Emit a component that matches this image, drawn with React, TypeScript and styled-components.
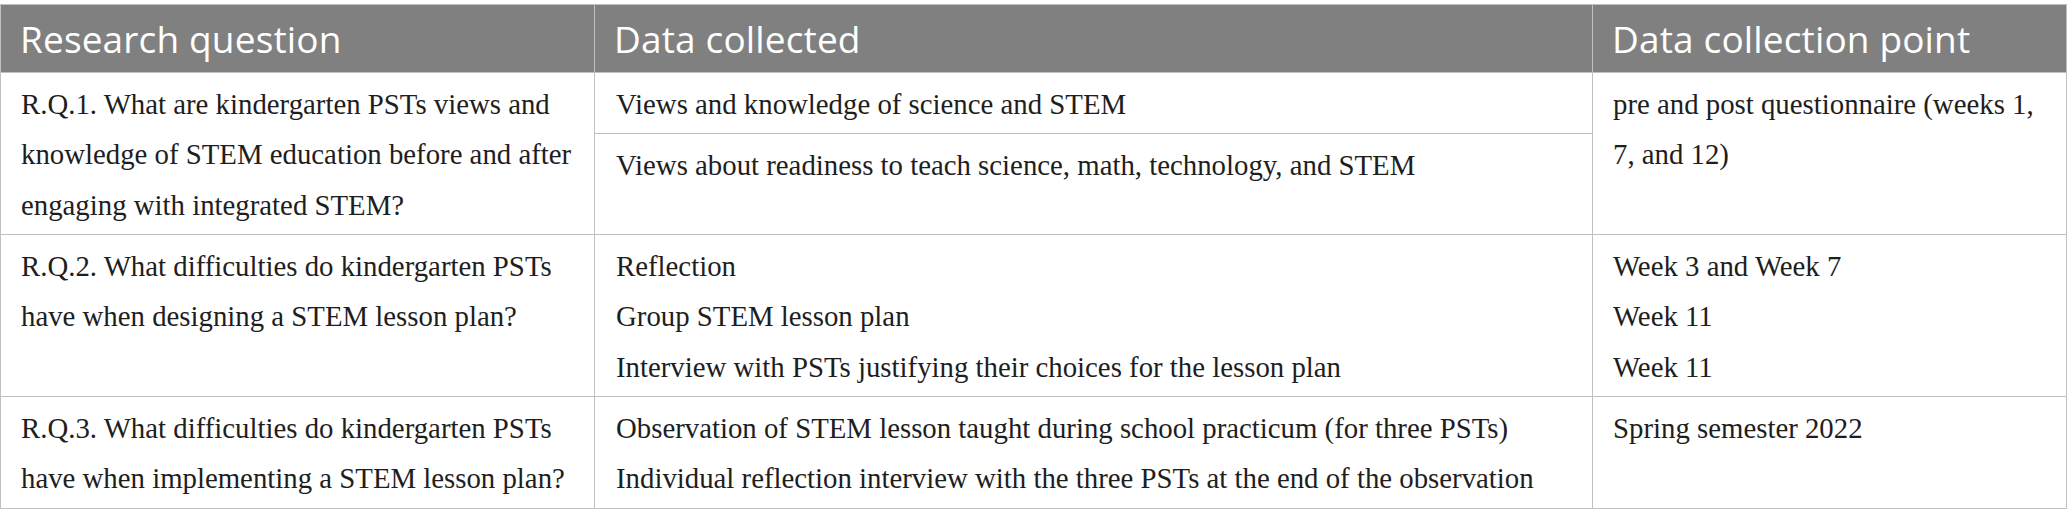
import React from "react";
import styled, { createGlobalStyle } from "styled-components";

const GlobalStyle = createGlobalStyle`
  html, body {
    margin: 0;
    padding: 0;
    background: #ffffff;
  }
`;

const BORDER = "#c0c0c0";

const Page = styled.div`
  padding-top: 4px;
`;

const Table = styled.div`
  display: grid;
  grid-template-columns: 594px 998px 474px;
  width: max-content;
  border-left: 1px solid ${BORDER};
  border-top: 1px solid ${BORDER};
`;

const HeadCell = styled.div`
  background: #808080;
  color: #ffffff;
  font-family: "Open Sans", "Liberation Sans", sans-serif;
  font-size: 37px;
  letter-spacing: 0.15px;
  line-height: 67px;
  padding: 0 19px;
  border-right: 1px solid ${BORDER};
  border-bottom: 1px solid ${BORDER};
  white-space: nowrap;
`;

const Cell = styled.div<{ $pad?: number }>`
  font-family: "Liberation Serif", "Times New Roman", serif;
  font-size: 28.8px;
  line-height: 50.5px;
  color: #1e1e1e;
  padding: 5.5px 20px 4px ${(p) => p.$pad ?? 20}px;
  border-right: 1px solid ${BORDER};
  border-bottom: 1px solid ${BORDER};
  white-space: nowrap;
`;

const SplitCell = styled.div`
  display: flex;
  flex-direction: column;
  border-right: 1px solid ${BORDER};
  border-bottom: 1px solid ${BORDER};
`;

const SubCell = styled.div<{ $last?: boolean }>`
  font-family: "Liberation Serif", "Times New Roman", serif;
  font-size: 28.8px;
  line-height: 50.5px;
  color: #1e1e1e;
  padding: 5.5px 20px 4px 21px;
  white-space: nowrap;
  flex: ${(p) => (p.$last ? 1 : "none")};
  border-bottom: ${(p) => (p.$last ? "none" : `1px solid ${BORDER}`)};
`;

const Line = styled.div``;

export default function App() {
  return (
    <>
      <GlobalStyle />
      <Page>
        <Table>
          <HeadCell>Research question</HeadCell>
          <HeadCell>Data collected</HeadCell>
          <HeadCell>Data collection point</HeadCell>

          <Cell>
            R.Q.1. What are kindergarten PSTs views and
            <br />
            knowledge of STEM education before and after
            <br />
            engaging with integrated STEM?
          </Cell>
          <SplitCell>
            <SubCell>Views and knowledge of science and STEM</SubCell>
            <SubCell $last>
              Views about readiness to teach science, math, technology, and STEM
            </SubCell>
          </SplitCell>
          <Cell>
            pre and post questionnaire (weeks 1,
            <br />
            7, and 12)
          </Cell>

          <Cell>
            R.Q.2. What difficulties do kindergarten PSTs
            <br />
            have when designing a STEM lesson plan?
          </Cell>
          <Cell $pad={21}>
            <Line>Reflection</Line>
            <Line>Group STEM lesson plan</Line>
            <Line>Interview with PSTs justifying their choices for the lesson plan</Line>
          </Cell>
          <Cell>
            <Line>Week 3 and Week 7</Line>
            <Line>Week 11</Line>
            <Line>Week 11</Line>
          </Cell>

          <Cell>
            R.Q.3. What difficulties do kindergarten PSTs
            <br />
            have when implementing a STEM lesson plan?
          </Cell>
          <Cell $pad={21}>
            <Line>
              Observation of STEM lesson taught during school practicum (for three PSTs)
            </Line>
            <Line>
              Individual reflection interview with the three PSTs at the end of the observation
            </Line>
          </Cell>
          <Cell>
            <Line>Spring semester 2022</Line>
          </Cell>
        </Table>
      </Page>
    </>
  );
}
